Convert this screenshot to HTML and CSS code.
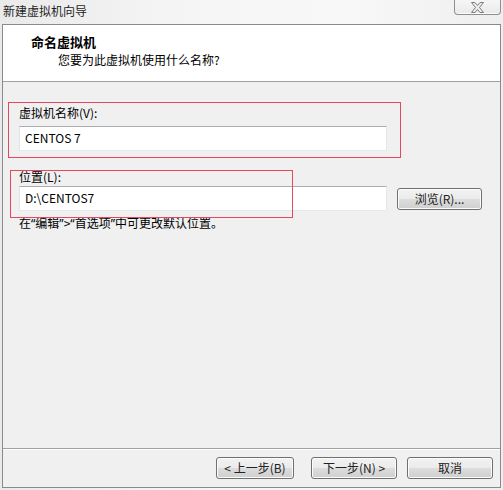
FILE: index.html
```html
<!DOCTYPE html>
<html lang="zh-CN">
<head>
<meta charset="utf-8">
<title>新建虚拟机向导</title>
<link rel="stylesheet" href="styles.css">
</head>
<body>
<div class="titlebar">
  <span class="title">新建虚拟机向导</span>
  <div class="close">
    <svg width="15" height="11" viewBox="0 0 15 11">
      <path d="M1.5 0.5 H5 L7.5 3.5 L10 0.5 H13.5 L9.5 5.5 L13.5 10.5 H10 L7.5 7.5 L5 10.5 H1.5 L5.5 5.5 Z" fill="#ececec" stroke="#7d7d7d" stroke-width="1" stroke-linejoin="round"/>
    </svg>
  </div>
</div>
<div class="window">
  <div class="header">
    <div class="h-title">命名虚拟机</div>
    <div class="h-sub">您要为此虚拟机使用什么名称?</div>
  </div>
  <div class="body">
    <div class="field">
      <label class="label">虚拟机名称(V):</label>
      <div class="row"><div class="input">CENTOS 7</div></div>
    </div>
    <div class="field second">
      <label class="label">位置(L):</label>
      <div class="row"><div class="input">D:\CENTOS7</div><button class="btn browse">浏览(R)...</button></div>
    </div>
    <div class="hint">在<span class="q">“</span>编辑<span class="q">”</span>&gt;<span class="q">“</span>首选项<span class="q">”</span>中可更改默认位置。</div>
    <div class="mark mark1"></div>
    <div class="mark mark2"></div>
  </div>
  <div class="footer">
    <button class="btn back">&lt; 上一步(B)</button>
    <button class="btn next">下一步(N) &gt;</button>
    <button class="btn cancel">取消</button>
  </div>
</div>
</body>
</html>
```

FILE: styles.css
```css
html, body {
  margin: 0;
  padding: 0;
}
body {
  width: 503px;
  height: 490px;
  overflow: hidden;
  background: linear-gradient(90deg, #eaeaea 0%, #f6f6f6 40%, #f8f8f8 70%, #eeeeee 100%);
  font-family: "Noto Sans CJK SC", "Noto Sans", sans-serif;
  font-size: 12px;
  color: #000;
}
.titlebar {
  height: 24px;
  display: flex;
  justify-content: space-between;
  align-items: flex-start;
}
.title {
  padding: 2px 0 0 3px;
  line-height: 18px;
  font-size: 12px;
  color: #1e1e1e;
}
.close {
  width: 45px;
  height: 14px;
  margin-right: 2px;
  border: 1px solid #8e8e8e;
  border-top: none;
  border-radius: 0 0 4px 4px;
  background: linear-gradient(#f6f6f6, #e9e9e9);
  display: flex;
  justify-content: center;
  align-items: center;
  box-shadow: inset 0 -1px 0 #fbfbfb;
}
.window {
  box-sizing: border-box;
  margin-left: 2px;
  width: 499px;
  height: 464px;
  border: 1px solid #8a8a8a;
  background: #f0f0f0;
  display: flex;
  flex-direction: column;
}
.header {
  height: 56px;
  background: #fff;
  border-bottom: 1px solid #a0a0a0;
  flex: none;
}
.h-title {
  font-weight: bold;
  font-size: 13px;
  line-height: 16px;
  padding: 9px 0 0 28px;
}
.h-sub {
  font-size: 12px;
  line-height: 16px;
  padding: 2px 0 0 55px;
}
.body {
  position: relative;
  flex: 1;
  padding: 23px 0 0 16px;
  border-bottom: 1px solid #a0a0a0;
  box-shadow: 0 1px 0 #ffffff;
}
.label {
  display: block;
  line-height: 16px;
  height: 16px;
}
.row {
  display: flex;
  align-items: center;
  margin-top: 5px;
}
.second {
  margin-top: 18px;
}
.second .row {
  margin-top: 1px;
}
.input {
  box-sizing: border-box;
  width: 368px;
  height: 25px;
  background: #fff;
  border: 1px solid #e3e9ef;
  border-top-color: #abadb3;
  border-left-color: #e2e3ea;
  padding-left: 5px;
  line-height: 22px;
  font-size: 12px;
}
.hint {
  margin-top: 4px;
  line-height: 16px;
}
.q {
  font-family: "Noto Sans", "Liberation Sans", sans-serif;
}
.btn {
  box-sizing: border-box;
  font-family: "Noto Sans CJK SC", "Noto Sans", sans-serif;
  font-size: 12px;
  color: #222;
  height: 22px;
  padding: 0;
  border: 1px solid #707070;
  border-radius: 3px;
  background: linear-gradient(#f2f2f2 0%, #ebebeb 50%, #dddddd 51%, #cfcfcf 100%);
  box-shadow: inset 0 0 0 1px #fcfcfc;
  line-height: 18px;
}
.browse {
  width: 85px;
  margin-left: 10px;
  margin-top: 1px;
}
.mark {
  position: absolute;
  border: 1px solid #e4475e;
  box-sizing: border-box;
}
.mark1 {
  left: 5px;
  top: 20px;
  width: 393px;
  height: 56px;
}
.mark2 {
  left: 7px;
  top: 88px;
  width: 283px;
  height: 48px;
}
.footer {
  height: 38px;
  flex: none;
  display: flex;
  justify-content: flex-end;
  align-items: flex-start;
  padding: 8px 7px 0 0;
  box-sizing: border-box;
}
.back {
  width: 78px;
}
.next {
  width: 86px;
  margin-left: 17px;
}
.cancel {
  width: 86px;
  margin-left: 10px;
}
```
